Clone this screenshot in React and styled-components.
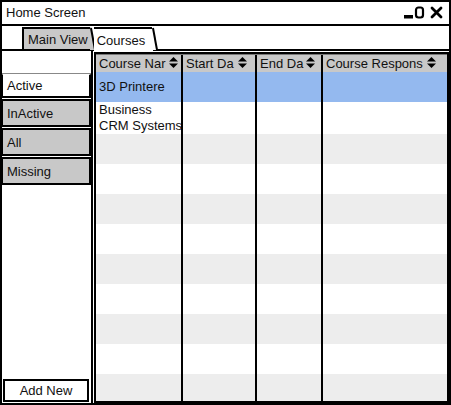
import React from "react";
import styled, { createGlobalStyle } from "styled-components";

const Global = createGlobalStyle`
  html, body { margin: 0; padding: 0; background: #fff; }
  * { box-sizing: border-box; }
  body { font-family: "Liberation Sans", Arial, sans-serif; font-size: 13px; color: #111; }
`;

const Window = styled.div`
  width: 451px;
  height: 405px;
  border: 2px solid #000;
  display: flex;
  flex-direction: column;
  background: #fff;
  overflow: hidden;
`;

const TitleBar = styled.div`
  height: 24px;
  flex: none;
  border-bottom: 2px solid #000;
  display: flex;
  align-items: center;
  justify-content: space-between;
  padding: 0 5px 1px 4px;
`;

const Title = styled.span`
  font-size: 13px;
`;

const Controls = styled.svg`
  display: block;
`;

const TabBar = styled.div`
  height: 25px;
  flex: none;
  display: flex;
  align-items: flex-end;
  border-bottom: 2px solid #000;
  padding-left: 20px;
`;

const Tab = styled.div`
  position: relative;
  height: ${(p) => (p.$active ? 24 : 22)}px;
  margin-bottom: ${(p) => (p.$active ? -2 : 0)}px;
  margin-right: ${(p) => (p.$active ? 0 : 3)}px;
  padding: 0 ${(p) => (p.$active ? 8 : 3)}px 0 ${(p) => (p.$active ? 3 : 4)}px;
  background: ${(p) => (p.$active ? "#fff" : "#c8c8c8")};
  border-top: 2px solid #000;
  border-left: ${(p) => (p.$active ? "none" : "2px solid #000")};
  display: flex;
  align-items: center;
  font-size: 13px;
  z-index: ${(p) => (p.$active ? 2 : 1)};
`;

const Slant = styled.svg`
  position: absolute;
  right: -5px;
  top: -2px;
`;

const TabSlant = ({ fill }) => (
  <Slant width="6" height="25" viewBox="0 0 6 25">
    <polygon points="0,0 1,0 5,23 0,23" fill={fill} />
    <path d="M1 1 L5 23" stroke="#000" strokeWidth="2" fill="none" />
  </Slant>
);

const Body = styled.div`
  flex: 1;
  display: flex;
  min-height: 0;
`;

const Side = styled.div`
  width: 91px;
  flex: none;
  border-right: 2px solid #000;
  display: flex;
  flex-direction: column;
`;

const SideBlank = styled.div`
  height: 23px;
  border-bottom: 1px solid #888;
`;

const FilterButton = styled.div`
  height: ${(p) => (p.$active ? 24 : 28)}px;
  margin-top: ${(p) => (p.$active ? 0 : 1)}px;
  background: ${(p) => (p.$active ? "#fff" : "#c8c8c8")};
  border: 2px solid #000;
  border-left: 1px solid #000;
  border-top: ${(p) => (p.$active ? "1px solid #fff" : "2px solid #000")};
  display: flex;
  align-items: center;
  padding-left: 4px;
  font-size: 13px;
`;

const Spacer = styled.div`
  flex: 1;
`;

const AddButton = styled.div`
  height: 23px;
  margin: 0 2px 1px 1px;
  border: 2px solid #000;
  display: flex;
  align-items: center;
  justify-content: center;
  font-size: 13px;
`;

const Grid = styled.div`
  flex: 1;
  margin: 1px 0 0 1px;
  border: 2px solid #000;
  display: flex;
  flex-direction: column;
  overflow: hidden;
  min-width: 0;
`;

const cols = "87px 74px 66px 1fr";

const Row = styled.div`
  display: grid;
  grid-template-columns: ${cols};
  height: ${(p) => p.$h}px;
  flex: none;
  background: ${(p) => p.$bg};
`;

const HeadRow = styled(Row)`
  border-top: 1px solid #777;
`;

const Cell = styled.div`
  border-right: ${(p) => (p.$last ? "none" : "2px solid #000")};
  padding: ${(p) => p.$pad || "0 3px"};
  overflow: hidden;
  white-space: nowrap;
  line-height: 16px;
  font-size: 13px;
  display: flex;
  flex-direction: column;
  justify-content: ${(p) => p.$justify || "center"};
  min-width: 0;
`;

const HeadCell = styled(Cell)`
  flex-direction: row;
  align-items: center;
  justify-content: flex-start;
  padding: 0 1px 0 3px;
  gap: ${(p) => p.$gap}px;
`;

const HeadText = styled.span`
  white-space: nowrap;
  flex: none;
`;

const SortIcon = styled.svg`
  flex: none;
  margin-top: -3px;
`;

const Sort = () => (
  <SortIcon width="9" height="11" viewBox="0 0 9 11">
    <polygon points="4.5,0 9,4.5 0,4.5" fill="#000" />
    <polygon points="0,6.5 9,6.5 4.5,11" fill="#000" />
  </SortIcon>
);

const headers = [
  { t: "Course Nar", gap: 4 },
  { t: "Start Da", gap: 4 },
  { t: "End Da", gap: 3 },
  { t: "Course Respons", gap: 4 },
];

const rows = [
  { h: 30, bg: "#94b9ef", cells: [["3D Printere"]] },
  { h: 32, bg: "#fff", cells: [["Business", "CRM Systems"]] },
];
for (let i = 0; i < 10; i++) {
  rows.push({ h: 30, bg: i % 2 === 0 ? "#ededed" : "#fff", cells: [] });
}

export default function App() {
  return (
    <>
      <Global />
      <Window>
        <TitleBar>
          <Title>Home Screen</Title>
          <Controls width="40" height="14" viewBox="0 0 40 14">
            <rect x="0" y="9" width="9" height="3.5" fill="#000" />
            <rect x="12" y="1.5" width="7" height="10" rx="2.5" fill="none" stroke="#000" strokeWidth="2.2" />
            <path d="M28 2 L37 11 M37 2 L28 11" stroke="#000" strokeWidth="2.8" strokeLinecap="round" />
          </Controls>
        </TitleBar>
        <TabBar>
          <Tab>
            Main View
            <TabSlant fill="#c8c8c8" />
          </Tab>
          <Tab $active>
            Courses
            <TabSlant fill="#fff" />
          </Tab>
        </TabBar>
        <Body>
          <Side>
            <SideBlank />
            <FilterButton $active>Active</FilterButton>
            <FilterButton>InActive</FilterButton>
            <FilterButton>All</FilterButton>
            <FilterButton>Missing</FilterButton>
            <Spacer />
            <AddButton>Add New</AddButton>
          </Side>
          <Grid>
            <HeadRow $h={18} $bg="#c8c8c8">
              {headers.map((h, i) => (
                <HeadCell key={h.t} $last={i === 3} $gap={h.gap}>
                  <HeadText>{h.t}</HeadText>
                  <Sort />
                </HeadCell>
              ))}
            </HeadRow>
            {rows.map((r, ri) => (
              <Row key={ri} $h={r.h} $bg={r.bg}>
                {[0, 1, 2, 3].map((ci) => {
                  const multi = r.cells[ci] && r.cells[ci].length > 1;
                  return (
                    <Cell key={ci} $last={ci === 3} $justify={multi ? "flex-start" : "center"} $pad={multi ? "0 0 0 3px" : "0 3px"}>
                      {(r.cells[ci] || []).map((t) => (
                        <span key={t}>{t}</span>
                      ))}
                    </Cell>
                  );
                })}
              </Row>
            ))}
          </Grid>
        </Body>
      </Window>
    </>
  );
}
